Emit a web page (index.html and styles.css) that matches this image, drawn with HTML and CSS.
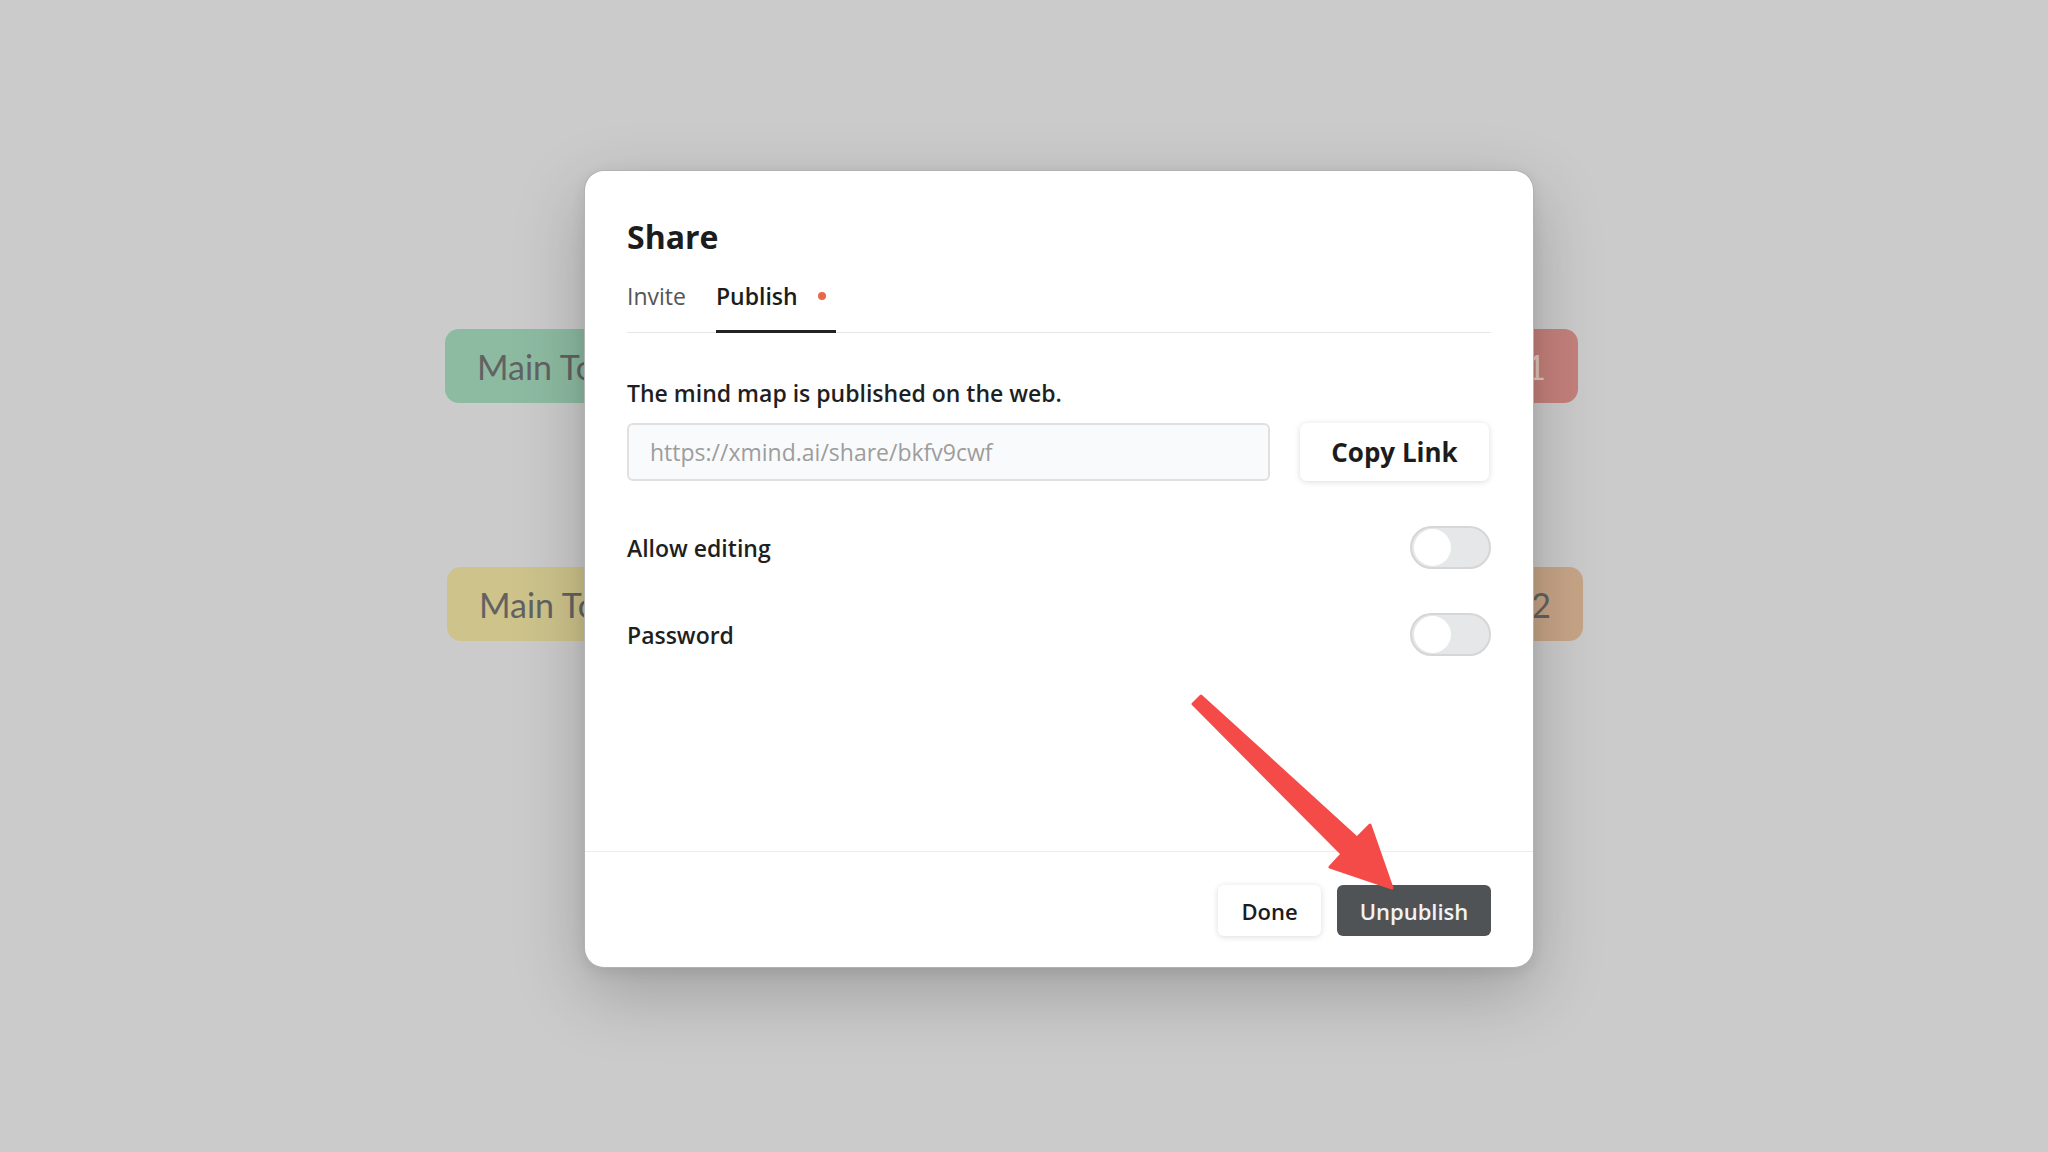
FILE: index.html
```html
<!DOCTYPE html>
<html lang="en">
<head>
    <meta charset="UTF-8">
    <meta name="viewport" content="width=device-width, initial-scale=1.0">
    <title>Share</title>
    <link rel="stylesheet" href="styles.css">
</head>
<body>
    <!-- mind map behind the dialog -->
    <div class="canvas">
        <div class="topic topic-green">Main Topic 3</div>
        <div class="topic topic-yellow">Main Topic 4</div>
        <div class="topic topic-red">Main Topic 1</div>
        <div class="topic topic-orange">Main Topic 2</div>
    </div>

    <main class="overlay">
        <div class="modal">
            <div class="modal-body">
                <h1 class="modal-title">Share</h1>
                <nav class="tabs">
                    <span class="tab">Invite</span>
                    <span class="tab tab-active">Publish<span class="dot"></span></span>
                </nav>

                <p class="status">The mind map is published on the web.</p>
                <div class="link-row">
                    <input class="link-input" type="text" placeholder="https://xmind.ai/share/bkfv9cwf">
                    <button class="copy-btn">Copy Link</button>
                </div>

                <div class="option">
                    <span>Allow editing</span>
                    <span class="switch"><span class="knob"></span></span>
                </div>
                <div class="option">
                    <span>Password</span>
                    <span class="switch"><span class="knob"></span></span>
                </div>
            </div>

            <footer class="modal-footer">
                <button class="btn btn-light">Done</button>
                <button class="btn btn-dark">Unpublish</button>
            </footer>
        </div>
    </main>

    <svg class="annotation" viewBox="0 0 2048 1152" width="2048" height="1152">
        <polygon fill="#f44b49" stroke="#f44b49" stroke-width="3" stroke-linejoin="round"
            points="1201,696 1357,838 1370,825 1392,888 1330,867 1342,854 1193,704"/>
    </svg>
</body>
</html>
```

FILE: styles.css
```css
/* page */
* {
    box-sizing: border-box;
}

body {
    margin: 0;
    width: 2048px;
    height: 1152px;
    overflow: hidden;
    position: relative;
    background-color: #cbcbcb;
    font-family: 'Open Sans', 'Lato', sans-serif;
    color: #1f1f1f;
}

/* mind map nodes sit on a free canvas */
.canvas {
    position: absolute;
    inset: 0;
}

.topic {
    position: absolute;
    height: 74px;
    border-radius: 14px;
    display: flex;
    align-items: center;
    padding: 0 32px;
    font-family: 'Lato', sans-serif;
    font-size: 34px;
    color: #626262;
    white-space: nowrap;
}

.topic-green {
    left: 445px;
    top: 329px;
    background-color: #8dbba2;
}

.topic-yellow {
    left: 447px;
    top: 567px;
    background-color: #cdc38b;
}

.topic-red {
    right: 470px;
    top: 329px;
    background-color: #c5817c;
    color: #e2c9c6;
}

.topic-orange {
    right: 465px;
    top: 567px;
    background-color: #c7a587;
}

/* dialog */
.overlay {
    position: relative;
    padding: 170px 0 0 584px;
}

.modal {
    width: 950px;
    height: 798px;
    background-color: #fff;
    border: 1px solid rgba(0, 0, 0, 0.3);
    border-radius: 20px;
    box-shadow: 0 24px 70px rgba(0, 0, 0, 0.22), 0 4px 14px rgba(0, 0, 0, 0.08);
    display: flex;
    flex-direction: column;
}

.modal-body {
    flex: 1;
    padding: 46px 42px 0 42px;
}

.modal-title {
    margin: 0;
    font-size: 32px;
    line-height: 40px;
    font-weight: 700;
    color: #1c1c1c;
}

.tabs {
    margin-top: 24px;
    display: flex;
    gap: 30px;
    border-bottom: 1px solid #e6e6e6;
}

.tab {
    font-size: 23px;
    line-height: 30px;
    padding-bottom: 19px;
    color: #555;
    border-bottom: 3px solid transparent;
    margin-bottom: -1px;
    display: flex;
    align-items: center;
}

.tab-active {
    color: #1c1c1c;
    font-weight: 600;
    border-bottom-color: #222;
    padding-right: 10px;
}

.dot {
    width: 8px;
    height: 8px;
    border-radius: 50%;
    background-color: #e8684a;
    margin-left: 20px;
}

.status {
    margin: 45px 0 0 0;
    font-size: 23px;
    line-height: 30px;
    font-weight: 600;
}

.link-row {
    margin-top: 15px;
    display: flex;
    gap: 30px;
}

.link-input {
    width: 643px;
    height: 58px;
    border: 2px solid #e0e0e0;
    border-radius: 6px;
    background-color: #f9fafb;
    padding: 0 21px;
    font-family: inherit;
    font-size: 23px;
    outline: none;
}

.link-input::placeholder {
    color: #9d9d9d;
}

.copy-btn {
    width: 189px;
    height: 58px;
    border: none;
    border-radius: 7px;
    background-color: #fff;
    box-shadow: 0 1px 6px rgba(0, 0, 0, 0.14);
    font-family: inherit;
    font-size: 26px;
    font-weight: 700;
    color: #1c1c1c;
}

.option {
    display: flex;
    justify-content: space-between;
    align-items: center;
    font-size: 23px;
    font-weight: 600;
    margin-top: 45px;
}

.option + .option {
    margin-top: 44px;
}

.switch {
    width: 81px;
    height: 43px;
    border-radius: 22px;
    background-color: #e5e7e8;
    border: 2px solid #d6d6d6;
    display: flex;
    align-items: center;
    padding-left: 2px;
}

.knob {
    width: 37px;
    height: 37px;
    border-radius: 50%;
    background-color: #fff;
}

.modal-footer {
    border-top: 1px solid #ececec;
    padding: 33px 42px 31px 42px;
    display: flex;
    justify-content: flex-end;
    gap: 16px;
}

.btn {
    height: 51px;
    border: none;
    border-radius: 6px;
    font-family: inherit;
    font-size: 22px;
    font-weight: 600;
    padding: 0;
}

.btn-light {
    width: 103px;
    background-color: #fff;
    color: #1c1c1c;
    box-shadow: 0 1px 6px rgba(0, 0, 0, 0.14);
}

.btn-dark {
    width: 154px;
    background-color: #505356;
    color: #f2f2f2;
}

/* red arrow drawn on top of the screenshot */
.annotation {
    position: absolute;
    top: 0;
    left: 0;
    pointer-events: none;
}
```
